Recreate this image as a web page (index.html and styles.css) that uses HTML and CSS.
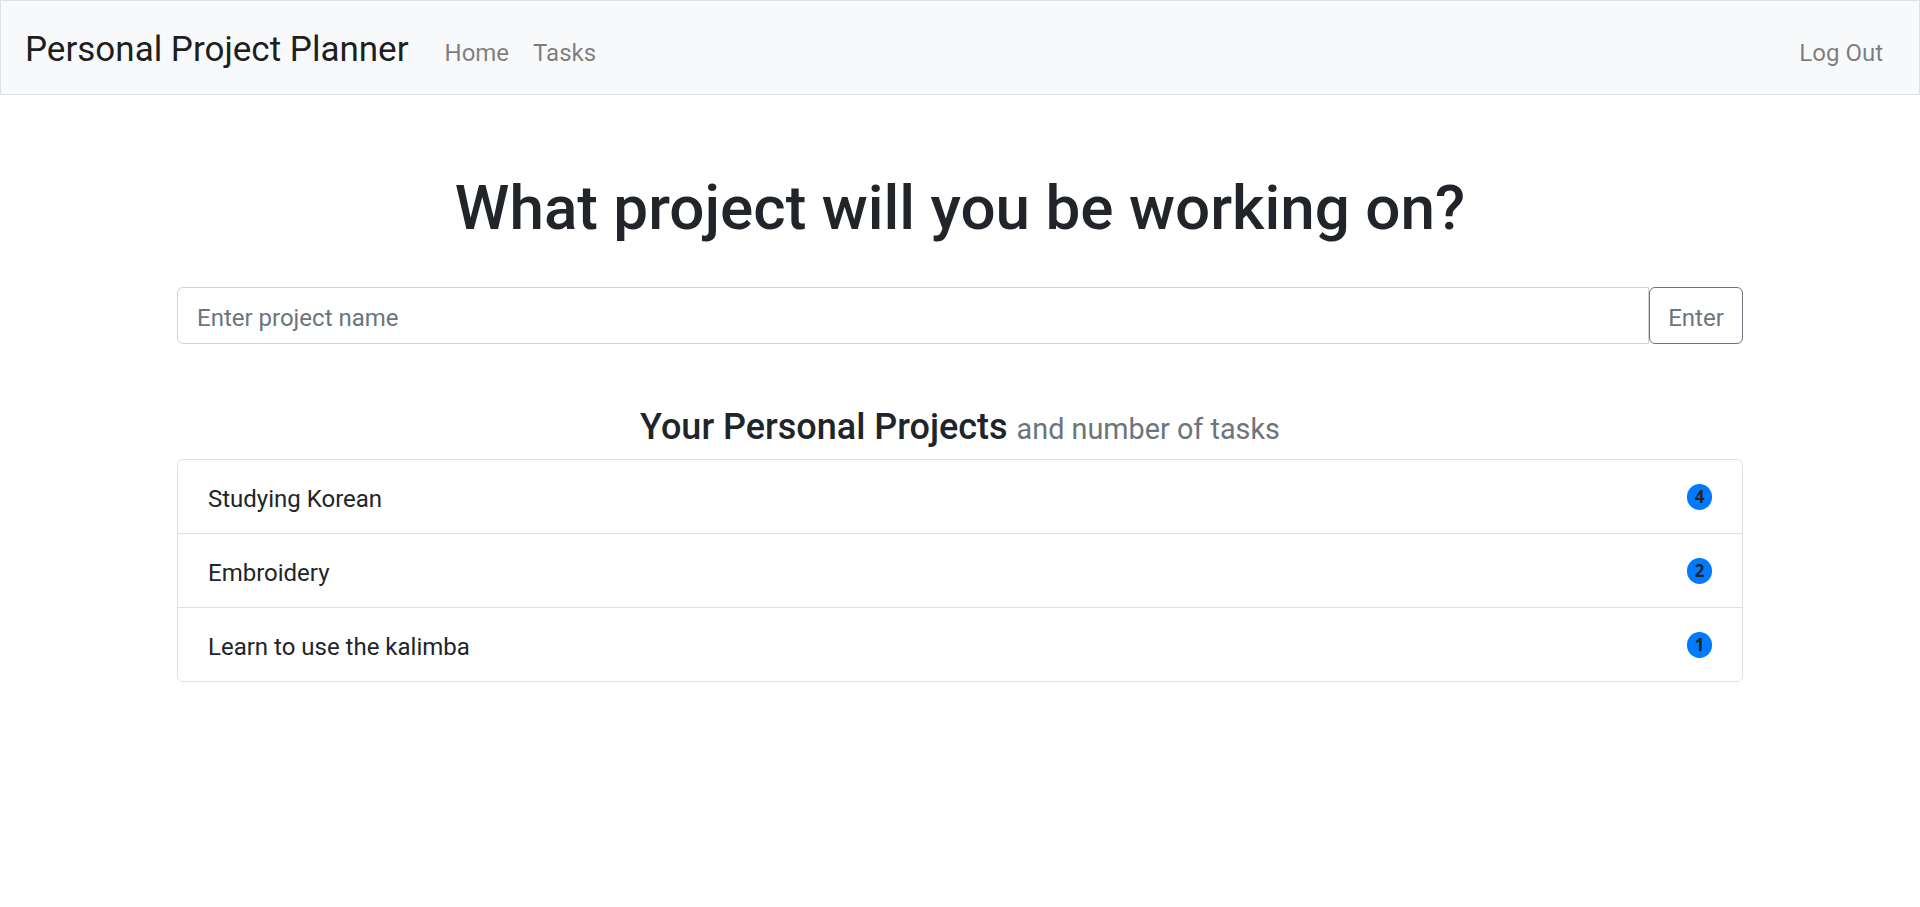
FILE: index.html
```html
<!DOCTYPE html>
<html lang="en">
<head>
<meta charset="utf-8">
<title>Personal Project Planner</title>
<link rel="stylesheet" href="styles.css">
</head>
<body>
<nav class="navbar">
  <a class="brand" href="#">Personal Project Planner</a>
  <a class="nav-link" href="#">Home</a>
  <a class="nav-link" href="#">Tasks</a>
  <a class="nav-link logout" href="#">Log Out</a>
</nav>
<main class="container">
  <h1 class="title">What project will you be working on?</h1>
  <form class="input-group">
    <input class="form-control" type="text" placeholder="Enter project name">
    <button class="btn-outline" type="button">Enter</button>
  </form>
  <h4 class="subtitle">Your Personal Projects <small class="muted">and number of tasks</small></h4>
  <ul class="list-group">
    <li class="list-item"><span class="item-text">Studying Korean</span><span class="badge">4</span></li>
    <li class="list-item"><span class="item-text">Embroidery</span><span class="badge">2</span></li>
    <li class="list-item"><span class="item-text">Learn to use the kalimba</span><span class="badge">1</span></li>
  </ul>
</main>
</body>
</html>
```
FILE: styles.css
```css
* { box-sizing: border-box; }
html, body { margin: 0; padding: 0; }
body {
  font-family: Roboto, "Liberation Sans", sans-serif;
  font-size: 24px;
  line-height: 1.5;
  color: #212529;
  background: #fff;
}
a { text-decoration: none; }

.navbar {
  display: flex;
  align-items: baseline;
  height: 95px;
  padding: 23px 24px 0 24px;
  background: #f8f9fa;
  border: 1px solid #dee0e2;
}
.brand {
  font-size: 35px;
  line-height: 52.5px;
  color: rgba(0,0,0,.9);
  margin-right: 24px;
}
.nav-link {
  font-size: 24px;
  line-height: 36px;
  padding: 0 12px;
  color: rgba(0,0,0,.5);
}
.logout { margin-left: auto; }

.container {
  max-width: 1566px;
  margin: 0 auto;
  padding-top: 77px;
}
.title {
  margin: 0 0 43px 0;
  font-size: 62px;
  font-weight: 500;
  line-height: 72px;
  text-align: center;
  color: #212529;
}
.input-group {
  display: flex;
  margin: 0;
}
.form-control {
  flex: 1;
  height: 57px;
  padding: 12px 18px 7px 19px;
  font-family: inherit;
  font-size: 24px;
  color: #495057;
  border: 1px solid #ced4da;
  border-radius: 6px 0 0 6px;
  outline: none;
  background: #fff;
}
.form-control::placeholder { color: #6c757d; opacity: 1; }
.btn-outline {
  width: 94px;
  height: 57px;
  padding: 12px 18px 7px;
  font-family: inherit;
  font-size: 24px;
  line-height: 36px;
  color: #6c757d;
  background: transparent;
  border: 1px solid #6c757d;
  border-radius: 6px;
}
.subtitle {
  margin: 62px 0 10px 0;
  font-size: 36px;
  font-weight: 500;
  line-height: 43px;
  text-align: center;
}
.muted {
  font-size: 28.8px;
  font-weight: 400;
  line-height: 1;
  color: #6c757d;
}
.list-group {
  list-style: none;
  margin: 0;
  padding: 0;
  border: 1px solid #dfdfdf;
  border-radius: 6px;
}
.list-item {
  display: flex;
  align-items: center;
  justify-content: space-between;
  height: 73px;
  padding: 0 30px;
}
.list-item + .list-item {
  height: 74px;
  border-top: 1px solid #dfdfdf;
}
.item-text {
  line-height: 36px;
  padding-top: 5px;
}
.badge {
  display: flex;
  align-items: center;
  justify-content: center;
  width: 25px;
  height: 26px;
  border-radius: 13px;
  background: #007bff;
  color: #212529;
  font-family: "Noto Sans", "Open Sans", sans-serif;
  font-size: 17px;
  font-weight: 700;
  line-height: 1;
}
```
